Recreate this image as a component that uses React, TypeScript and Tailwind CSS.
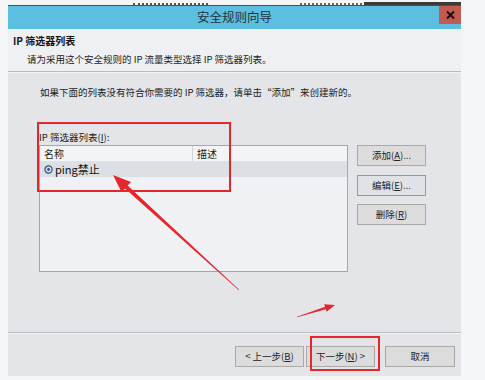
import React from 'react';

const font = "font-['Noto_Sans_CJK_SC',sans-serif]";

const Btn: React.FC<{ children: React.ReactNode; focused?: boolean; className?: string }> = ({
  children,
  focused = false,
  className = ''
}) => (
  <div
    className={`h-[21px] flex items-center justify-center border text-[9.5px] text-[#222] ${
      focused ? 'border-[#6fa3d6] bg-[#dfe3e8]' : 'border-[#a9a9a9] bg-[#dcdcdd]'
    } ${className}`}
  >
    {children}
  </div>
);

const Key: React.FC<{ k: string }> = ({ k }) => <span className="underline">{k}</span>;

export default function App() {
  return (
    <div className={`relative w-[485px] h-[380px] overflow-hidden bg-[#f4f5f7] ${font}`}>
      {/* window behind, only its bottom edge shows */}
      <div className="h-[5px] pl-[8px] overflow-hidden">
        <div className="w-[453px] h-[5px] relative flex items-end">
          <div className="ml-[125px] w-[75px] h-[2px] border-b-2 border-dotted border-[#555]" />
          <div className="ml-[92px] w-[62px] h-[2px] border-b-2 border-dotted border-[#666]" />
          <div className="ml-[2px] flex-1 h-[3px] bg-[#3a3a3a]" />
        </div>
      </div>

      <div className="ml-[8px] w-[453px] flex flex-col">
        {/* title bar */}
        <div className="relative h-[24px] bg-[#5cbfe0] border-t border-[#4a4f55] flex items-center justify-center">
          <span className="text-[12.5px] text-[#1d3340]">安全规则向导</span>
          <div className="absolute right-0 top-0 w-[22px] h-[18px] bg-[#c35a4f] flex items-center justify-center">
            <svg width="9" height="8" viewBox="0 0 9 8">
              <path d="M1 0.5 L8 7.5 M8 0.5 L1 7.5" stroke="#111" strokeWidth="2" />
            </svg>
          </div>
        </div>

        {/* header */}
        <div className="h-[43px] bg-[#eff0f3] pl-[5px] pt-[5px] border-b border-[#b8bbc0]">
          <div className="text-[10px] font-bold text-[#111] leading-[14px]">IP 筛选器列表</div>
          <div className="text-[9.5px] text-[#222] leading-[14px] mt-[4px] pl-[14px]">
            请为采用这个安全规则的 IP 流量类型选择 IP 筛选器列表。
          </div>
        </div>

        {/* body */}
        <div className="h-[261px] bg-[#e3e5e9] border-t border-[#f3f4f6] pl-[31px] pt-[12px] border-b border-b-[#b8bbc0]">
          <div className="text-[9.5px] text-[#222] leading-[14px] pl-[1px]">
            如果下面的列表没有符合你需要的 IP 筛选器，请单击“添加”来创建新的。
          </div>
          <div className="text-[9.5px] text-[#222] leading-[14px] mt-[31px]">
            IP 筛选器列表(<Key k="I" />):
          </div>
          <div className="flex gap-[9px] mt-[1px]">
            <div className="w-[309px] h-[127px] border border-[#a3a6ab] bg-[#eff1f4] flex flex-col">
              <div className="h-[16px] flex bg-[#f3f4f6] border-b border-[#dfe1e5] text-[10px] text-[#222]">
                <div className="w-[153px] pl-[4px] border-r border-[#d2d4d8] flex items-center">名称</div>
                <div className="pl-[4px] flex items-center">描述</div>
              </div>
              <div className="h-[15px] bg-[#dcdfe3] flex items-center pl-[4px] gap-[2px] text-[11px] text-[#111]">
                <svg width="9" height="9" viewBox="0 0 9 9">
                  <circle cx="4.5" cy="4.5" r="3.6" fill="none" stroke="#2c5680" strokeWidth="1.2" />
                  <circle cx="4.5" cy="4.5" r="1.4" fill="#2c5680" />
                </svg>
                <span>ping禁止</span>
              </div>
            </div>
            <div className="w-[69px] flex flex-col">
              <Btn>
                添加(<Key k="A" />)...
              </Btn>
              <Btn focused className="mt-[9px]">
                编辑(<Key k="E" />)...
              </Btn>
              <Btn className="mt-[8px]">
                删除(<Key k="R" />)
              </Btn>
            </div>
          </div>
        </div>

        {/* footer */}
        <div className="h-[43px] bg-[#e3e5e9] border-t border-[#f3f4f6] flex justify-end items-start pt-[12px] pr-[6px]">
          <Btn className="w-[69px]">
            &lt; 上一步(<Key k="B" />)
          </Btn>
          <Btn className="w-[69px] ml-[2px]">
            下一步(<Key k="N" />) &gt;
          </Btn>
          <Btn className="w-[70px] ml-[10px]">取消</Btn>
        </div>
      </div>

      {/* annotations */}
      <div className="absolute left-[37px] top-[122px] w-[194px] h-[70px] border-2 border-[#e5262b]" />
      <div className="absolute left-[310px] top-[336px] w-[70px] h-[35px] border-2 border-[#e5262b]" />
      <svg className="absolute left-0 top-0" width="485" height="380" viewBox="0 0 485 380">
        <polygon
          points="113,175 131,182 127.6,185.6 239.2,289.8 238.8,290.2 125,188.6 121.6,192.3"
          fill="#e5262b"
        />
        <polygon
          points="335,305 324.2,304.2 325.1,306.8 296.9,316.7 297.1,317.3 325.8,309.2 326.7,311.8"
          fill="#e5262b"
        />
      </svg>
    </div>
  );
}
